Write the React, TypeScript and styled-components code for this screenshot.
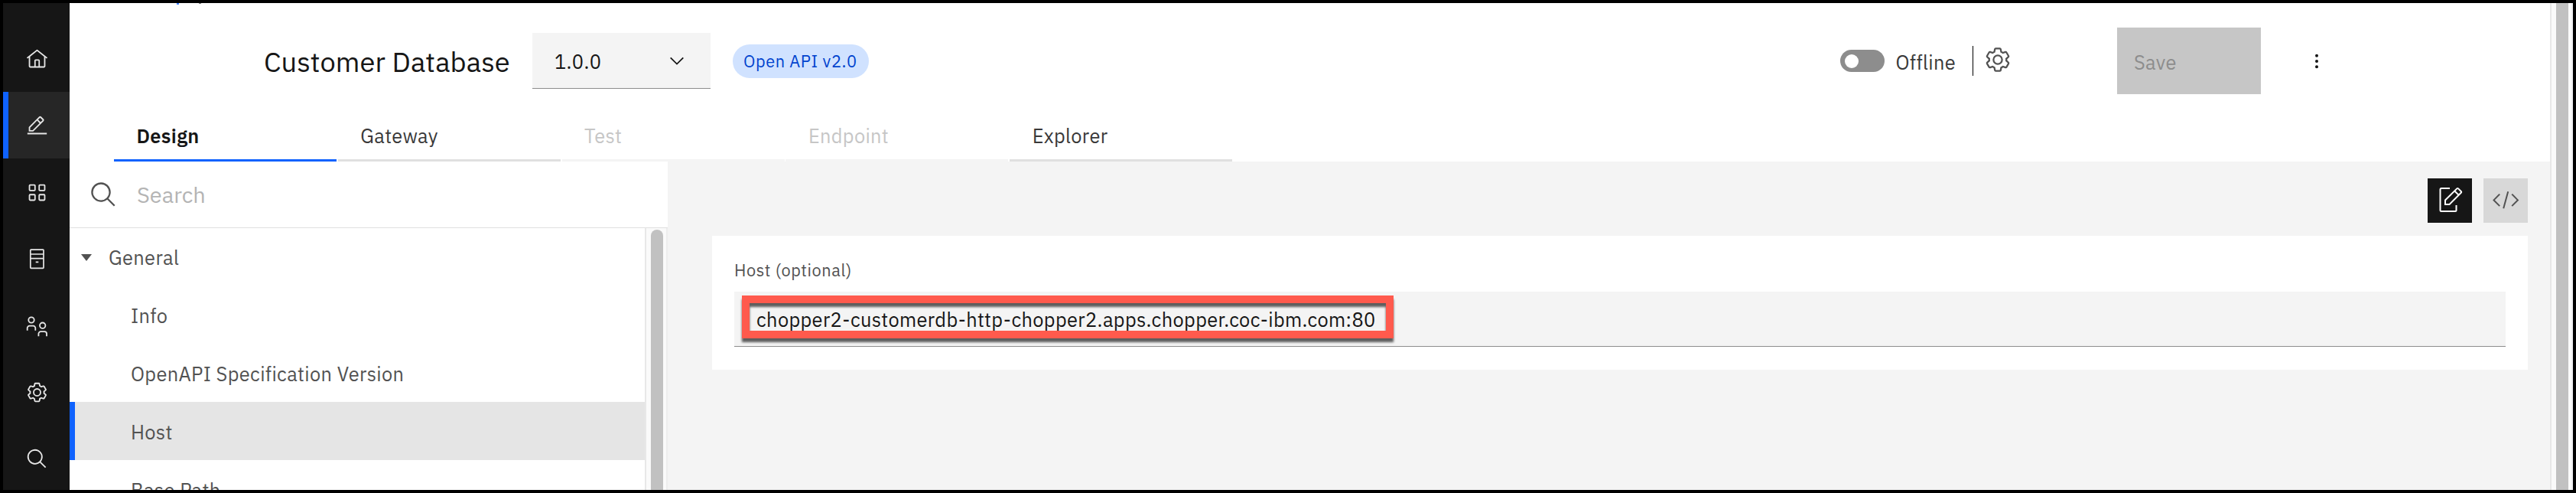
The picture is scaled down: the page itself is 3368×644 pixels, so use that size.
import React from 'react';
import styled, { createGlobalStyle } from 'styled-components';

const GlobalStyle = createGlobalStyle`
  * { box-sizing: border-box; }
  body { margin: 0; font-family: "IBM Plex Sans", Roboto, "Liberation Sans", sans-serif; }
  svg { display: block; flex: none; }
`;

const Window = styled.div`
  display: flex;
  width: 3368px;
  height: 644px;
  border: 4px solid #000;
  background: #fff;
  overflow: hidden;
`;

const SideNav = styled.nav`
  display: flex;
  flex-direction: column;
  flex: none;
  width: 87px;
  padding-top: 29px;
  background: #161616;
`;

const NavItem = styled.div<{ $active?: boolean }>`
  display: flex;
  flex: none;
  align-items: center;
  justify-content: center;
  height: 87px;
  padding: 1px 0 0 1px;
  background: ${p => (p.$active ? '#262626' : 'transparent')};
  box-shadow: ${p => (p.$active ? 'inset 7px 0 0 #0f62fe' : 'none')};
  color: #e6e6e6;
`;

const Main = styled.main`
  display: flex;
  flex-direction: column;
  flex: none;
  width: 3243px;
`;

const Crumbs = styled.div`
  display: flex;
  height: 2px;
  padding-left: 140px;
  gap: 26px;
`;

const CrumbTail = styled.span<{ $color: string }>`
  width: 3px;
  height: ${p => (p.$color === '#0f62fe' ? 2 : 1)}px;
  background: ${p => p.$color};
  opacity: 0.8;
`;

const Header = styled.header`
  display: flex;
  align-items: center;
  height: 87px;
  margin-top: 30px;
  padding-left: 254px;
`;

const Title = styled.h1`
  width: 351px;
  margin: 0;
  padding-top: 3px;
  font-size: 36.25px;
  font-weight: 400;
  letter-spacing: 0.08px;
  line-height: 44px;
  white-space: nowrap;
  color: #161616;
`;

const VersionSelect = styled.div`
  display: flex;
  align-items: center;
  justify-content: space-between;
  width: 233px;
  height: 73px;
  padding: 3px 34px 0 29px;
  border-bottom: 1px solid #8d8d8d;
  background: #f4f4f4;
  font-size: 25.4px;
  letter-spacing: 0.36px;
  color: #161616;

  svg { margin-bottom: 2px; }
`;

const Tag = styled.span`
  display: flex;
  align-items: center;
  width: 178px;
  height: 44px;
  margin-left: 29px;
  padding: 1px 0 0 14px;
  border-radius: 22px;
  background: #d0e2ff;
  font-size: 21.75px;
  letter-spacing: 0.58px;
  white-space: nowrap;
  color: #0043ce;
`;

const HeaderActions = styled.div`
  display: flex;
  align-items: center;
  margin-left: auto;
  margin-right: 301.5px;
`;

const Toggle = styled.span`
  display: flex;
  align-items: center;
  width: 58px;
  height: 29px;
  padding-left: 6px;
  border-radius: 15px;
  background: #8d8d8d;
`;

const Knob = styled.span`
  width: 18px;
  height: 18px;
  border-radius: 50%;
  background: #fff;
`;

const ToggleLabel = styled.span`
  width: 100px;
  padding: 3px 0 0 15px;
  font-size: 25.4px;
  letter-spacing: 0.36px;
  color: #393939;
`;

const Divider = styled.span`
  width: 1px;
  height: 39px;
  margin-left: 15px;
  background: #000;
`;

const GearButton = styled.span`
  margin: 0 138.5px 3px 14px;
  color: #525252;
`;

const SaveButton = styled.span`
  display: flex;
  align-items: center;
  width: 188px;
  height: 87px;
  padding: 3px 0 0 22px;
  background: #c6c6c6;
  font-size: 25.4px;
  letter-spacing: 0.36px;
  color: #8d8d8d;
`;

const Kebab = styled.span`
  margin-left: 68.5px;
  color: #161616;
`;

const TabBar = styled.div`
  display: flex;
  gap: 1.8px;
  height: 66px;
  margin-top: 22px;
  padding-left: 58px;
`;

type TabState = 'selected' | 'normal' | 'disabled';
const tabLine = { selected: '#0f62fe', normal: '#e0e0e0', disabled: '#f4f4f4' };
const tabText = { selected: '#161616', normal: '#393939', disabled: '#c6c6c6' };

const Tab = styled.div<{ $state: TabState }>`
  display: flex;
  align-items: center;
  width: 291px;
  padding: 2px 0 0 29.5px;
  border-bottom: 3px solid ${p => tabLine[p.$state]};
  font-size: 25.4px;
  font-weight: ${p => (p.$state === 'selected' ? 600 : 400)};
  letter-spacing: 0.33px;
  color: ${p => tabText[p.$state]};
`;

const Body = styled.div`
  display: flex;
  flex: 1;
  min-height: 0;
`;

const Outline = styled.aside`
  display: flex;
  flex-direction: column;
  flex: none;
  width: 782px;
`;

const SearchBar = styled.div`
  display: flex;
  flex: none;
  align-items: center;
  height: 87px;
  padding-left: 26px;
  border-bottom: 1px solid #e0e0e0;
  color: #525252;
`;

const SearchHint = styled.span`
  margin-left: 25px;
  font-size: 29px;
  color: #b4b4b4;
`;

const OutlineScroll = styled.div`
  display: flex;
  flex: 1;
  min-height: 0;
`;

const Tree = styled.div`
  flex: 1;
  overflow: hidden;
`;

const TreeGroup = styled.div`
  display: flex;
  align-items: center;
  height: 75px;
  padding: 2px 0 0 15px;
  font-size: 25.4px;
  letter-spacing: 0.36px;
  color: #525252;

  svg { margin: 0 22px 1px 0; }
`;

const TreeItem = styled.div<{ $active?: boolean }>`
  display: flex;
  align-items: center;
  height: 76px;
  padding: 2px 0 0 80px;
  background: ${p => (p.$active ? '#e5e5e5' : 'transparent')};
  box-shadow: ${p => (p.$active ? 'inset 7px 0 0 #0f62fe' : 'none')};
  font-size: 25.4px;
  letter-spacing: 0.34px;
  color: #525252;
`;

const TreeScrollbar = styled.div`
  display: flex;
  width: 30px;
  padding: 2px 4px 0 6px;
  border-left: 2px solid #e8e8e8;
  border-right: 2px solid #ededed;
  background: #fafafa;
`;

const TreeThumb = styled.div`
  width: 16px;
  border-radius: 8px 8px 0 0;
  background: #c1c1c1;
`;

const Editor = styled.section`
  flex: 1;
  padding: 22px 29px 0 58px;
  background: #f4f4f4;
`;

const ViewSwitch = styled.div`
  display: flex;
  justify-content: flex-end;
  gap: 15px;
  margin-bottom: 17px;
`;

const ViewButton = styled.span<{ $active?: boolean }>`
  display: flex;
  align-items: center;
  justify-content: center;
  width: 58px;
  height: 58px;
  background: ${p => (p.$active ? '#161616' : '#d8d8d8')};
  color: ${p => (p.$active ? '#fff' : '#525252')};
`;

const Card = styled.div`
  height: 175px;
  padding: 32px 29px 0;
  background: #fff;
`;

const FieldLabel = styled.div`
  margin-bottom: 15px;
  font-size: 21.75px;
  letter-spacing: 0.58px;
  line-height: 26px;
  color: #525252;
`;

const Field = styled.div`
  position: relative;
  display: flex;
  align-items: center;
  height: 72px;
  padding: 2px 0 0 29px;
  border-bottom: 1px solid #8d8d8d;
  background: #f4f4f4;
  font-size: 25.4px;
  letter-spacing: 0.35px;
  white-space: nowrap;
  color: #161616;
`;

const Highlight = styled.div`
  position: absolute;
  left: 10px;
  top: 5px;
  width: 852px;
  height: 56px;
  border: 10px solid #ff5a4d;
  filter: drop-shadow(0 5px 1.8px rgba(0, 0, 0, 0.62));
`;

const PageScrollbar = styled.div`
  display: flex;
  flex: 1;
  padding-left: 6px;
  border-left: 2px solid #e8e8e8;
  border-right: 2px solid #ededf0;
  background: #fafafa;
`;

const PageThumb = styled.div`
  width: 16px;
  background: #c1c1c1;
`;

const GEAR =
  'M27,16.76c0-.25,0-.5,0-.76s0-.51,0-.77l1.92-1.68A2,2,0,0,0,29.3,11L26.94,7a2,2,0,0,0-1.73-1,2,2,0,0,0-.64.1l-2.43.82a11.35,11.35,0,0,0-1.31-.75l-.51-2.52a2,2,0,0,0-2-1.61H13.64a2,2,0,0,0-2,1.61l-.51,2.52a11.48,11.48,0,0,0-1.32.75L7.43,6.06A2,2,0,0,0,6.79,6,2,2,0,0,0,5.06,7L2.7,11a2,2,0,0,0,.41,2.51L5,15.24c0,.25,0,.5,0,.76s0,.51,0,.77L3.11,18.45A2,2,0,0,0,2.7,21L5.06,25a2,2,0,0,0,1.73,1,2,2,0,0,0,.64-.1l2.43-.82a11.35,11.35,0,0,0,1.31.75l.51,2.52a2,2,0,0,0,2,1.61h4.72a2,2,0,0,0,2-1.61l.51-2.52a11.48,11.48,0,0,0,1.32-.75l2.42.82a2,2,0,0,0,.64.1,2,2,0,0,0,1.73-1L29.3,21a2,2,0,0,0-.41-2.51ZM25.21,24l-3.43-1.16a8.86,8.86,0,0,1-2.71,1.57L18.36,28H13.64l-.71-3.55a9.36,9.36,0,0,1-2.7-1.57L6.79,24,4.43,20l2.72-2.4a8.9,8.9,0,0,1,0-3.13L4.43,12,6.79,8l3.43,1.16a8.86,8.86,0,0,1,2.71-1.57L13.64,4h4.72l.71,3.55a9.36,9.36,0,0,1,2.7,1.57L25.21,8,27.57,12l-2.72,2.4a8.9,8.9,0,0,1,0,3.13L27.57,20Z';

const GearIcon = ({ size }: { size: number }) => (
  <svg width={size} height={size} viewBox="0 0 32 32" fill="currentColor">
    <path d={GEAR} />
    <circle cx="16" cy="16" r="5" fill="none" stroke="currentColor" strokeWidth="2" />
  </svg>
);

const SearchIcon = ({ size }: { size: number }) => (
  <svg width={size} height={size} viewBox="0 0 32 32" fill="currentColor">
    <path d="M29,27.5859l-7.5521-7.5521a11.0177,11.0177,0,1,0-1.4141,1.4141L27.5859,29ZM4,13a9,9,0,1,1,9,9A9.01,9.01,0,0,1,4,13Z" />
  </svg>
);

const HomeIcon = () => (
  <svg width="29" height="29" viewBox="0 0 32 32" fill="currentColor">
    <path d="M16.6123,2.2138a1.01,1.01,0,0,0-1.2427,0L1,13.4194l1.2427,1.5717L4,13.6210V26a2.0041,2.0041,0,0,0,2,2H26a2.0037,2.0037,0,0,0,2-2V13.63L29.7573,15,31,13.4282ZM18,26H14V18h4Zm2,0V18a2.0023,2.0023,0,0,0-2-2H14a2.002,2.002,0,0,0-2,2v8H6V12.0615l10-7.79,10,7.8005V26Z" />
  </svg>
);

const EditIcon = () => (
  <svg width="29" height="29" viewBox="0 0 32 32" fill="currentColor">
    <path d="M2 26H30V28H2zM25.4,9c0.8-0.8,0.8-2,0-2.8l-3.6-3.6c-0.8-0.8-2-0.8-2.8,0l-15,15V24h6.4L25.4,9zM20.4,4L24,7.6l-3,3L17.4,7L20.4,4zM6,22v-3.6l10-10l3.6,3.6l-10,10H6z" />
  </svg>
);

const GridIcon = () => (
  <svg width="29" height="29" viewBox="0 0 32 32" fill="none" stroke="currentColor" strokeWidth="2">
    <rect x="5" y="5" width="8" height="8" rx="1" />
    <rect x="19" y="5" width="8" height="8" rx="1" />
    <rect x="5" y="19" width="8" height="8" rx="1" />
    <rect x="19" y="19" width="8" height="8" rx="1" />
  </svg>
);

const CatalogIcon = () => (
  <svg width="29" height="29" viewBox="0 0 29 29" fill="none" stroke="currentColor" strokeWidth="1.7">
    <rect x="5.8" y="2.2" width="17.2" height="24.2" rx="0.8" />
    <path d="M6 8h17M6 13.6h17M12.700 18.300h3.600" />
  </svg>
);

const MembersIcon = () => (
  <svg width="29" height="29" viewBox="0 0 29 29" fill="none" stroke="currentColor" strokeWidth="1.8">
    <circle cx="7" cy="7" r="3.700" />
    <path d="M1.700 20.700v-3.200a2.800 2.800 0 0 1 2.800-2.800h5a2.800 2.800 0 0 1 2.800 2.800V20.700" />
    <circle cx="21.700" cy="14.200" r="3.700" />
    <path d="M16.400 28.200v-3.200a2.800 2.800 0 0 1 2.800-2.800h5a2.800 2.800 0 0 1 2.800 2.800v3.200" />
  </svg>
);

const ChevronIcon = () => (
  <svg width="20" height="12" viewBox="0 0 20 12" fill="none" stroke="currentColor" strokeWidth="1.8">
    <path d="M1.700 1.300L10 9.600l8.300-8.300" />
  </svg>
);

const CaretIcon = () => (
  <svg width="14" height="9" viewBox="0 0 14 9" fill="currentColor">
    <path d="M0 0h14L7 9z" />
  </svg>
);

const KebabIcon = () => (
  <svg width="8" height="22" viewBox="0 0 8 22" fill="currentColor">
    <circle cx="4" cy="3.700" r="2" />
    <circle cx="4" cy="11" r="2" />
    <circle cx="4" cy="18.300" r="2" />
  </svg>
);

const FormViewIcon = () => (
  <svg width="58" height="58" viewBox="0 0 58 58" fill="none" stroke="currentColor" strokeWidth="2">
    <path d="M29 13H18a1.500 1.500 0 0 0-1.500 1.500v27A1.500 1.500 0 0 0 18 43h18a1.500 1.500 0 0 0 1.500-1.500V35" />
    <path d="M23 34v-5.500L38.300 13.400a1.300 1.300 0 0 1 1.800 0l3.600 3.600a1.300 1.300 0 0 1 0 1.800L28.500 34zM35.300 16.500l5.400 5.400" />
  </svg>
);

const CodeViewIcon = () => (
  <svg width="58" height="58" viewBox="0 0 58 58" fill="none" stroke="currentColor" strokeWidth="2">
    <path d="M21.200 20.600L13.500 28.400l7.700 7.700M37.200 20.600l7.700 7.800-7.700 7.700M32.200 17.200l-6 22" />
  </svg>
);

const NAV = [
  { id: 'home', icon: <HomeIcon /> },
  { id: 'develop', icon: <EditIcon />, active: true },
  { id: 'manage', icon: <GridIcon /> },
  { id: 'catalog', icon: <CatalogIcon /> },
  { id: 'members', icon: <MembersIcon /> },
  { id: 'settings', icon: <GearIcon size={29} /> },
  { id: 'search', icon: <SearchIcon size={29} /> },
];

const TABS: { label: string; state: TabState }[] = [
  { label: 'Design', state: 'selected' },
  { label: 'Gateway', state: 'normal' },
  { label: 'Test', state: 'disabled' },
  { label: 'Endpoint', state: 'disabled' },
  { label: 'Explorer', state: 'normal' },
];

const TREE = [
  { label: 'Info' },
  { label: 'OpenAPI Specification Version' },
  { label: 'Host', active: true },
  { label: 'Base Path' },
];

export default function App() {
  return (
    <>
      <GlobalStyle />
      <Window>
        <SideNav>
          {NAV.map(n => (
            <NavItem key={n.id} $active={n.active}>{n.icon}</NavItem>
          ))}
        </SideNav>
        <Main>
          <Crumbs>
            <CrumbTail $color="#0f62fe" />
            <CrumbTail $color="#525252" />
          </Crumbs>
          <Header>
            <Title>Customer Database</Title>
            <VersionSelect>1.0.0<ChevronIcon /></VersionSelect>
            <Tag>Open API v2.0</Tag>
            <HeaderActions>
              <Toggle><Knob /></Toggle>
              <ToggleLabel>Offline</ToggleLabel>
              <Divider />
              <GearButton><GearIcon size={36} /></GearButton>
              <SaveButton>Save</SaveButton>
              <Kebab><KebabIcon /></Kebab>
            </HeaderActions>
          </Header>
          <TabBar>
            {TABS.map(t => (
              <Tab key={t.label} $state={t.state}>{t.label}</Tab>
            ))}
          </TabBar>
          <Body>
            <Outline>
              <SearchBar>
                <SearchIcon size={37} />
                <SearchHint>Search</SearchHint>
              </SearchBar>
              <OutlineScroll>
                <Tree>
                  <TreeGroup><CaretIcon />General</TreeGroup>
                  {TREE.map(t => (
                    <TreeItem key={t.label} $active={t.active}>{t.label}</TreeItem>
                  ))}
                </Tree>
                <TreeScrollbar><TreeThumb /></TreeScrollbar>
              </OutlineScroll>
            </Outline>
            <Editor>
              <ViewSwitch>
                <ViewButton $active><FormViewIcon /></ViewButton>
                <ViewButton><CodeViewIcon /></ViewButton>
              </ViewSwitch>
              <Card>
                <FieldLabel>Host (optional)</FieldLabel>
                <Field>
                  chopper2-customerdb-http-chopper2.apps.chopper.coc-ibm.com:80
                  <Highlight />
                </Field>
              </Card>
            </Editor>
          </Body>
        </Main>
        <PageScrollbar><PageThumb /></PageScrollbar>
      </Window>
    </>
  );
}
